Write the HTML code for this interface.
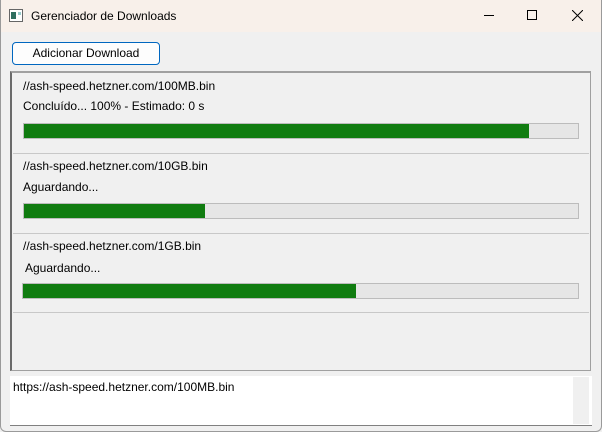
<!DOCTYPE html><html><head><style>
*{margin:0;padding:0;box-sizing:border-box}
body{width:602px;height:432px;background:#f0f0f0;font-family:"Liberation Sans",sans-serif;font-size:12px;color:#000;position:relative;overflow:hidden}
.tb{position:absolute;left:0;top:0;width:602px;height:32px;background:#f8f0ea}
.a{position:absolute}
.bar{position:absolute;height:16px;background:#e6e6e6;border:1px solid #bcbcbc}
.bar i{display:block;height:100%;background:#107c10}
.sep{position:absolute;left:13px;width:576px;height:1px;background:#fff;border-top:1px solid #c8c8c8}
</style></head><body>
<div class="tb"></div>
<svg class="a" style="left:9px;top:9px" width="14" height="13"><rect x="0.5" y="0.5" width="13" height="12" fill="#fff" stroke="#666"/><rect x="2" y="3" width="5" height="7" fill="#2f6f5f"/><rect x="9" y="3" width="3" height="3" fill="#9cc"/></svg>
<div class="a" style="left:31px;top:9px;font-size:12px">Gerenciador de Downloads</div>
<div class="a" style="left:484px;top:15px;width:10px;height:1px;background:#000"></div>
<div class="a" style="left:527px;top:10px;width:10px;height:10px;border:1px solid #000"></div>
<svg class="a" style="left:572px;top:10px" width="11" height="11"><path d="M0 0L11 11M11 0L0 11" stroke="#000" stroke-width="1"/></svg>
<div class="a" style="left:12px;top:42px;width:148px;height:23px;border:1px solid #0067c0;border-radius:4px;background:#fdfdfd;text-align:center;line-height:21px">Adicionar Download</div>
<div class="a" style="left:10px;top:71px;width:581px;height:300px;border:1px solid #a0a0a0;border-left:2px solid #6a6a6a;border-top:2px solid #a0a0a0"></div>
<div class="a" style="left:23px;top:79px">//ash-speed.hetzner.com/100MB.bin</div>
<div class="a" style="left:23px;top:99px">Concluído... 100% - Estimado: 0 s</div>
<div class="bar" style="left:23px;top:123px;width:556px"><i style="width:505px"></i></div>
<div class="sep" style="top:153px"></div>
<div class="a" style="left:23px;top:159px">//ash-speed.hetzner.com/10GB.bin</div>
<div class="a" style="left:23px;top:180px">Aguardando...</div>
<div class="bar" style="left:23px;top:203px;width:556px"><i style="width:181px"></i></div>
<div class="sep" style="top:233px"></div>
<div class="a" style="left:23px;top:239px">//ash-speed.hetzner.com/1GB.bin</div>
<div class="a" style="left:25px;top:261px">Aguardando...</div>
<div class="bar" style="left:22px;top:283px;width:557px"><i style="width:333px"></i></div>
<div class="sep" style="top:312px"></div>
<div class="a" style="left:10px;top:376px;width:582px;height:50px;background:#fff;border-bottom:1px solid #808080"></div>
<div class="a" style="left:573px;top:377px;width:16px;height:47px;background:#f0f0f0"></div>
<div class="a" style="left:13px;top:380px">https://ash-speed.hetzner.com/100MB.bin</div>
<div class="a" style="left:0;top:0;width:602px;height:432px;border:1px solid #9a9a9a;border-top:none;border-radius:0 0 6px 6px"></div>
</body></html>
